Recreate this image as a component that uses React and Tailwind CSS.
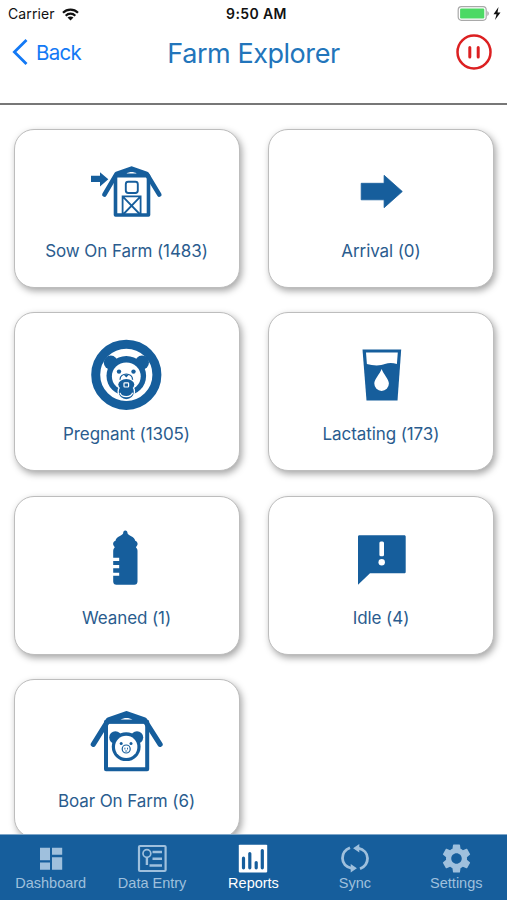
import { MdSettings } from "react-icons/md"

const BarnWithArrow = () => (
  <svg viewBox="0 0 92 80" className="h-20 w-[92px] text-[#165e9c]" fill="none" stroke="currentColor">
    <path d="M10 24.800h9v-3.600l8.300 7.100-8.300 7.100V31h-9z" fill="currentColor" stroke="none" />
    <path d="M23.400 43.600 35.600 22.800l15-5.200 15 5.200 12.700 20.800" strokeWidth="4.600" strokeLinecap="round" strokeLinejoin="round" />
    <path d="M35 22.500l15.600-5.500L66 22.500v3H35z" fill="currentColor" stroke="none" />
    <path d="M45.500 22.600c3-2 7.200-2 10.200 0z" fill="white" stroke="none" />
    <path d="M34.500 24.800V64h33V24.800z" strokeWidth="3.600" strokeLinejoin="round" />
    <rect x="44.800" y="30.800" width="12" height="11.200" rx="2.400" strokeWidth="1.900" />
    <path d="M41.600 64V45.400h18V64M41.600 45.400 59.600 64M59.600 45.400 41.600 64" strokeWidth="1.800" />
  </svg>
)

const ArrowRight = () => (
  <svg viewBox="-0.7 0 92 80" className="h-20 w-[92px] text-[#165e9c]" fill="currentColor">
    <path
      d="M25.500 32.300h22.900v-8l18.200 16.200-18.200 16.200v-7.900H25.500z"
      stroke="currentColor"
      strokeWidth="0.800"
      strokeLinejoin="round"
    />
  </svg>
)

const BearPacifier = () => (
  <svg viewBox="0 -0.8 92 80" className="h-20 w-[92px] text-[#165e9c]" fill="currentColor">
    <circle cx="45.300" cy="40" r="30.600" fill="white" stroke="currentColor" strokeWidth="9" />
    <path d="M36 25.500c5-3 13.600-3 18.600 0z" />
    <circle cx="29.800" cy="27.800" r="7" />
    <circle cx="61" cy="27.800" r="7" />
    <circle cx="45.300" cy="41" r="19.800" />
    <ellipse cx="45.300" cy="41.600" rx="14.400" ry="14" fill="white" />
    <circle cx="38" cy="36.800" r="2.200" />
    <circle cx="52.500" cy="36.800" r="2.200" />
    <path d="M39 45c0-7.500 12.600-7.500 12.600 0" fill="none" stroke="currentColor" strokeWidth="1.300" />
    <path d="M43 40.300h4.600l-2.300 2.400z" />
    <ellipse cx="45.300" cy="57" rx="8.200" ry="8" stroke="white" strokeWidth="1.300" />
    <path d="M39 58c1.500 5 11 5 12.600 0" fill="none" stroke="white" strokeWidth="1.200" />
    <ellipse cx="45.300" cy="49.800" rx="8" ry="5.600" />
    <rect x="43" y="48" width="4.600" height="4.200" rx="0.800" fill="none" stroke="white" strokeWidth="1.200" />
  </svg>
)

const MilkGlass = () => (
  <svg viewBox="-0.7 -0.6 92 80" className="h-20 w-[92px] text-[#165e9c]" fill="currentColor">
    <path d="M26.800 14.800h38.700l-3.700 51H30.800z" />
    <path d="M30.300 18h31.800l-.900 11.500c-4-1.500-8-1.700-12 0s-12 1.700-18 0z" fill="white" />
    <path d="M45.900 34.300c2 5.500 7.300 10 7.300 14.700a7.300 7.300 0 0 1-14.600 0c0-4.700 5.300-9.200 7.300-14.700z" fill="white" />
  </svg>
)

const BabyBottle = () => (
  <svg viewBox="0 0 92 80" className="h-20 w-[92px] text-[#165e9c]" fill="currentColor">
    <path d="M44.200 12.500c1.600 0 2.300 1.200 2.400 3 .2 1.700 7 3 7.600 7.200 1.600.2 2.400 1.800 2.400 3.400s-1.600 2.400-1.600 3.400c1 .8 1.500 2 1.500 3.500v30.500c0 2-1.200 3.300-3.200 3.300H35.400c-2 0-3.200-1.300-3.200-3.300v-5.700h6v-3h-6v-4.500h6V47h-6v-4h6v-3.200h-6V33c0-1.500.5-2.700 1.500-3.500 0-1-1.600-1.800-1.600-3.400s.8-3.200 2.400-3.400c.6-4.200 7.400-5.500 7.600-7.200.1-1.800.8-3 2.100-3z" />
  </svg>
)

const IdleBubble = () => (
  <svg viewBox="-0.5 0 92 80" className="h-20 w-[92px] text-[#165e9c]" fill="currentColor">
    <path d="M24 17.300h44.700c1 0 1.500.5 1.500 1.500v35c0 1-.5 1.500-1.500 1.500H34.500l-12 11.400V18.800c0-1 .5-1.500 1.500-1.500z" />
    <rect x="43.900" y="23.500" width="4.600" height="14.700" rx="1.500" fill="white" />
    <circle cx="46.200" cy="44.200" r="3.200" fill="white" />
  </svg>
)

const BarnWithBoar = () => (
  <svg viewBox="0 -0.5 92 80" className="h-20 w-[92px] text-[#165e9c]" fill="none" stroke="currentColor">
    <path d="M12.300 42.800 27.500 18.400l18-6.200 18 6.200 15.600 24.400" strokeWidth="5.200" strokeLinecap="round" strokeLinejoin="round" />
    <path d="M26 18l19.500-6L65 18v4H26z" fill="currentColor" stroke="none" />
    <path d="M39.500 18.200c3.500-2.300 8.500-2.300 12 0z" fill="white" stroke="none" />
    <path d="M25 20.200v47.600h41.200V20.200z" strokeWidth="4" strokeLinejoin="round" />
    <g fill="currentColor" stroke="none">
      <circle cx="34.400" cy="36" r="6.200" />
      <circle cx="56" cy="36" r="6.200" />
      <circle cx="45.200" cy="45.200" r="14.400" />
      <circle cx="45.200" cy="45.400" r="11.200" fill="white" />
      <circle cx="40.200" cy="42" r="1.500" />
      <circle cx="50" cy="42" r="1.500" />
    </g>
    <circle cx="45.200" cy="47.500" r="4" strokeWidth="1.200" />
    <path d="M43.900 46.200v1.800M46.500 46.200v1.800M44.200 49.500h2" strokeWidth="0.900" />
  </svg>
)

const cards = [
  { label: "Sow On Farm", count: 1483, icon: BarnWithArrow },
  { label: "Arrival", count: 0, icon: ArrowRight },
  { label: "Pregnant", count: 1305, icon: BearPacifier },
  { label: "Lactating", count: 173, icon: MilkGlass },
  { label: "Weaned", count: 1, icon: BabyBottle },
  { label: "Idle", count: 4, icon: IdleBubble },
  { label: "Boar On Farm", count: 6, icon: BarnWithBoar },
]

const DashboardIcon = () => (
  <svg viewBox="0 0 30 30" className="size-[30px]" fill="currentColor">
    <path d="M4 3.800h10v12.400H4zM16 3.800h10.200v7H16zM4 18.500h10v7.200H4zM16 13.300h10.200v12.400H16z" />
  </svg>
)

const DataEntryIcon = () => (
  <svg viewBox="0 0 30 30" className="size-[30px]" fill="none" stroke="currentColor">
    <rect x="2" y="2" width="26.600" height="25" rx="1" strokeWidth="2.200" />
    <circle cx="9.900" cy="9.500" r="3.900" strokeWidth="1.700" />
    <path d="M9.900 13.500V21" strokeWidth="2.400" />
    <path d="M15.500 8H25M15.500 14.700H25M12.500 21.500H25" strokeWidth="2.500" />
  </svg>
)

const ReportsIcon = () => (
  <svg viewBox="0 0 30 30" className="size-[30px]">
    <rect x="0.800" y="0.800" width="28.400" height="27.600" rx="0.800" fill="currentColor" />
    <path d="M5.500 14.200v9.600M11.800 9.500v14.300M18.200 18.500v5.300M24.300 6.500v17.300" stroke="#165e9c" strokeWidth="3.200" strokeLinecap="round" />
  </svg>
)

const SyncIcon = () => (
  <svg viewBox="0 0 30 30" className="size-[30px]" fill="none" stroke="currentColor" strokeWidth="2.800">
    <path d="M10 3.800C5 5.800 2.500 9.500 2.500 14.300c0 4.800 3.500 8.900 9.500 10.200" />
    <path d="M20 24.800c5-2 7.500-5.700 7.500-10.500S24 5.400 18 4.100" />
    <path d="M19.300 0v8.600l-6.200-4.300zM10.700 20v8.600l6.200-4.300z" fill="currentColor" stroke="none" />
  </svg>
)

const SettingsIcon = () => <MdSettings className="-mt-[3px] mb-[-2px] size-[35px]" />

const tabs = [
  { label: "Dashboard", icon: DashboardIcon },
  { label: "Data Entry", icon: DataEntryIcon },
  { label: "Reports", icon: ReportsIcon, active: true },
  { label: "Sync", icon: SyncIcon },
  { label: "Settings", icon: SettingsIcon },
]

function StatusBar() {
  return (
    <div className="grid h-7 grid-cols-3 items-center text-[14px] leading-7 text-[#111]">
      <div className="flex items-center gap-[7px] pl-2">
        <span className="tracking-[0.1px]">Carrier</span>
        <svg viewBox="0 0 17 13" className="h-[13px] w-[17px]" fill="none" stroke="currentColor" strokeWidth="2.200">
          <path d="M1 4.800c4.200-4.200 10.800-4.200 15 0M3.700 7.700c2.700-2.700 6.900-2.700 9.600 0" />
          <path d="M5.500 9.600c1.700-1.500 4.300-1.500 6 0l-3 3z" fill="currentColor" stroke="none" />
        </svg>
      </div>
      <div className="pl-1.5 text-center font-semibold tracking-[0.4px]">9:50 AM</div>
      <div className="flex items-center justify-end gap-1 pr-1.5 pb-0.5">
        <svg viewBox="0 0 32 15" className="h-[15px] w-8">
          <rect x="1.200" y="0.700" width="28" height="13.600" rx="3.200" fill="white" stroke="#a9a9a9" strokeWidth="1.200" />
          <rect x="3.100" y="2.600" width="24.200" height="9.800" rx="1.200" fill="#4cd964" />
          <path d="M30.300 5c2 .8 2 4.200 0 5z" fill="#a9a9a9" />
        </svg>
        <svg viewBox="0 0 8 13" className="h-[13px] w-2" fill="currentColor">
          <path d="M5.500 0 .5 7.200h3L2 13l5.500-7.500h-3z" />
        </svg>
      </div>
    </div>
  )
}

function Header() {
  return (
    <div className="flex h-[77px] items-start justify-between border-b-2 border-[#777] pl-3 pr-[15px]">
      <button className="flex h-12 w-20 items-center gap-2 text-[#1379f5]">
        <svg viewBox="0 0 16 26" className="h-[26px] w-4" fill="none" stroke="currentColor" strokeWidth="2.800">
          <path d="M14.500 1 2.400 13l12.100 12" />
        </svg>
        <span className="pt-0.5 text-[20.500px] tracking-[-0.700px]">Back</span>
      </button>
      <h1 className="h-12 pl-[3px] text-[27px] leading-[51px] tracking-[-0.450px] text-[#2275bb]">Farm Explorer</h1>
      <button className="flex h-12 w-20 items-center justify-end text-[#dc2021]">
        <svg viewBox="0 0 36 36" className="size-9" fill="none" stroke="currentColor">
          <circle cx="18" cy="18" r="16.500" strokeWidth="2.500" />
          <path d="M13.800 13.500v9.500M22.200 13.500v9.500" strokeWidth="3" strokeLinecap="round" />
        </svg>
      </button>
    </div>
  )
}

function FarmCard({ label, count, icon: Icon }) {
  return (
    <div className="flex h-[159px] flex-col items-center rounded-[20px] border border-[#bdbdbd] bg-white pt-[21px] shadow-[2px_3px_7px_rgba(0,0,0,0.35)]">
      <Icon />
      <div className="mt-2 whitespace-nowrap text-[17px] leading-6 tracking-[-0.090px] text-[#2a5c8e]">
        {label} ({count})
      </div>
    </div>
  )
}

export default function App() {
  return (
    <div className="flex h-[900px] w-[507px] flex-col overflow-hidden bg-white font-['Inter','Liberation_Sans',sans-serif]">
      <StatusBar />
      <Header />
      <main className="min-h-0 flex-1 overflow-hidden pt-6">
        <div className="grid grid-cols-2 gap-x-[28.500px] gap-y-[24.300px] pl-[13.500px] pr-[13px]">
          {cards.map((card) => (
            <FarmCard key={card.label} {...card} />
          ))}
        </div>
      </main>
      <nav className="grid h-[66px] shrink-0 grid-cols-5 border-t border-[#7ea6c9] bg-[#165e9c] font-['Liberation_Sans',sans-serif]">
        {tabs.map(({ label, icon: Icon, active }) => (
          <button
            key={label}
            className={`flex flex-col items-center pt-[9px] text-[14.500px] leading-[18px] ${active ? "text-white" : "text-[#9fc0dd]"}`}
          >
            <Icon />
            <span className="whitespace-nowrap">{label}</span>
          </button>
        ))}
      </nav>
    </div>
  )
}
